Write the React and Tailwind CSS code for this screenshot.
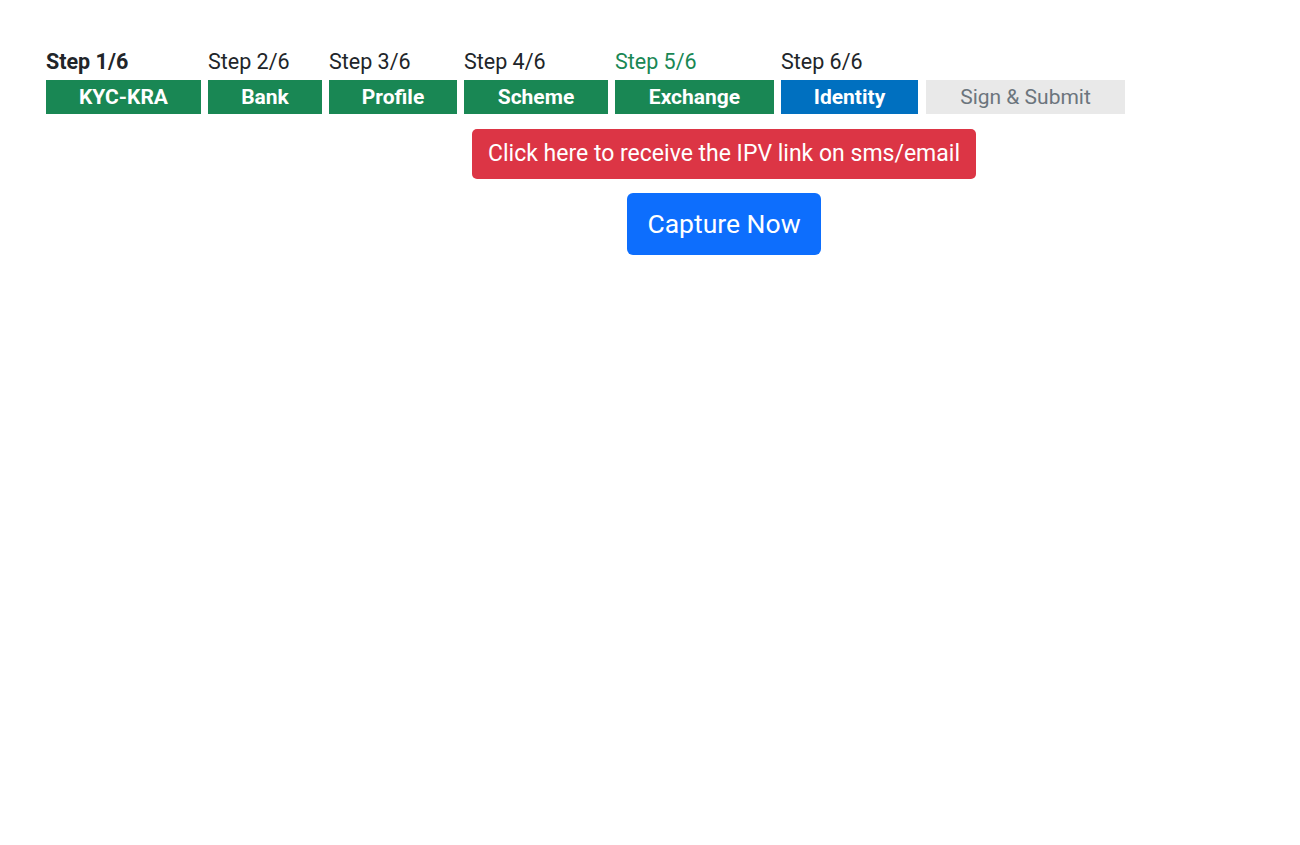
export default function App() {
  const steps = [
    { label: "Step 1/6", labelCls: "font-bold text-[#212529]", name: "KYC-KRA", w: "w-[155px]", bar: "bg-[#198754] text-white font-bold" },
    { label: "Step 2/6", labelCls: "text-[#212529]", name: "Bank", w: "w-[114px]", bar: "bg-[#198754] text-white font-bold" },
    { label: "Step 3/6", labelCls: "text-[#212529]", name: "Profile", w: "w-[128px]", bar: "bg-[#198754] text-white font-bold" },
    { label: "Step 4/6", labelCls: "text-[#212529]", name: "Scheme", w: "w-[144px]", bar: "bg-[#198754] text-white font-bold" },
    { label: "Step 5/6", labelCls: "text-[#198754]", name: "Exchange", w: "w-[159px]", bar: "bg-[#198754] text-white font-bold" },
    { label: "Step 6/6", labelCls: "text-[#212529]", name: "Identity", w: "w-[137px]", bar: "bg-[#0070c0] text-white font-bold" },
    { label: "", labelCls: "", name: "Sign & Submit", w: "w-[199px] ml-[1px]", bar: "bg-[#e9e9e9] text-[#6c757d]" },
  ];
  return (
    <div className="min-h-[845px] bg-white font-['Roboto',sans-serif] pt-[47px]">
      <div className="flex gap-[7px] pl-[46px]">
        {steps.map((s, i) => (
          <div key={i} className={`flex flex-col ${s.w}`}>
            <div className={`h-[31px] text-[21.5px] leading-[30px] whitespace-nowrap ${s.labelCls}`}>{s.label}</div>
            <div className={`mt-[2px] h-[34px] pt-[2px] flex items-center justify-center whitespace-nowrap text-[21px] ${s.bar}`}>{s.name}</div>
          </div>
        ))}
      </div>
      <div className="flex flex-col items-center pl-[148px] mt-[15px] gap-[14px]">
        <button className="h-[50px] w-[504px] rounded-[5px] bg-[#dc3545] text-white text-[23px] whitespace-nowrap flex items-center justify-center">
          Click here to receive the IPV link on sms/email
        </button>
        <button className="h-[62px] w-[194px] rounded-[6px] bg-[#0d6efd] text-white text-[26.5px] flex items-center justify-center">
          Capture Now
        </button>
      </div>
    </div>
  );
}
